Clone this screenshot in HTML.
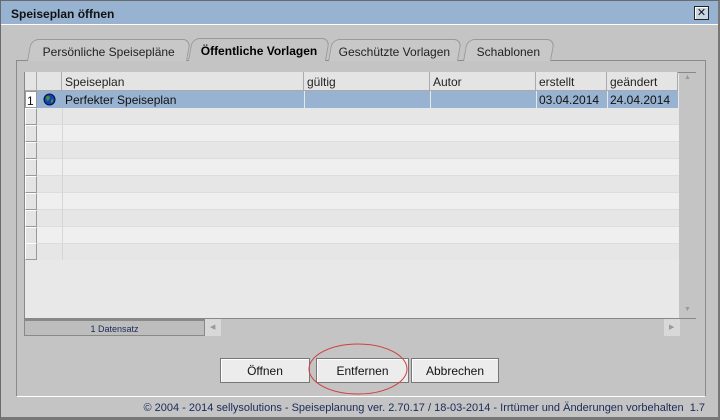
<!DOCTYPE html>
<html><head><meta charset="utf-8"><style>
*{box-sizing:border-box;margin:0;padding:0}
body{width:720px;height:420px;background:#c4c4c4;font-family:"Liberation Sans",sans-serif;font-size:12px;color:#111;position:relative;overflow:hidden}
.abs{position:absolute}
.win{left:0;top:0;width:720px;height:420px;border:1px solid #6a6a6a;border-bottom:3px solid #777;border-right:2px solid #777}
.title{left:1px;top:1px;width:717px;height:24px;background:#98b3d1;border-bottom:1px solid #fff;font-weight:bold;font-size:12px;padding:6px 0 0 10px}
.close{left:694px;top:6px;width:15px;height:14px;border:1px solid #222;background:#c8d6e6;font-size:11px;line-height:12px;text-align:center;box-shadow:inset 1px 1px #fff}
.tab{top:39px;height:22px;border:1px solid #999;border-bottom:none;border-radius:8px 8px 0 0;background:#c8c8c8;font-size:12px;text-align:center;padding-top:5px;transform:skew(-10deg);color:#222}
.tab span{display:inline-block;transform:skew(10deg)}
.panel{left:16px;top:60px;width:690px;height:337px;border:1px solid #fff;border-left:1px solid #8a8a8a;border-top:1px solid #8a8a8a;border-right:1px solid #8a8a8a;background:#c4c4c4}
.table{left:24px;top:72px;width:672px;height:247px;background:#e8e8e8;border:1px solid #888}
.hd{top:72px;height:19px;background:#e4e4e4;border-right:1px solid #aaa;border-bottom:1px solid #aaa;padding:3px 0 0 3px;color:#222}
.cell{height:17px;padding:2px 0 0 3px}
.rn{left:25px;width:12px;height:17px;background:#e4e4e4;border:1px solid #999;border-top:1px solid #fff;border-left:1px solid #fff}
.btn{top:358px;height:25px;background:#ececec;border:1px solid #777;box-shadow:inset 1px 1px #fff;text-align:center;padding-top:5px;font-size:12px;color:#111}
</style></head><body>
<div class="abs win"></div>
<div class="abs title">Speiseplan öffnen</div>
<div class="abs close">✕</div>
<div class="abs panel"></div>
<div class="abs tab" style="left:29px;width:160px"><span>Persönliche Speisepläne</span></div>
<div class="abs tab" style="left:330px;width:130px"><span>Geschützte Vorlagen</span></div>
<div class="abs tab" style="left:465px;width:88px"><span>Schablonen</span></div>
<div class="abs tab" style="left:190px;width:138px;background:#c4c4c4;height:23px;top:38px;z-index:2;font-weight:bold;color:#000"><span>Öffentliche Vorlagen</span></div>
<div class="abs table"></div>
<div class="abs" style="left:37px;top:108px;width:642px;height:152px;background:repeating-linear-gradient(#e6e6e6 0 16px,#ddd 16px 17px,#efefef 17px 33px,#ddd 33px 34px)"></div>
<div class="abs" style="left:62px;top:108px;width:1px;height:152px;background:#d6d6d6"></div>
<div class="abs" style="left:37px;top:91px;width:641px;height:17px;background:#98b3d1"></div>
<div class="abs" style="left:304px;top:91px;width:1px;height:17px;background:#e8e8e8"></div>
<div class="abs" style="left:430px;top:91px;width:1px;height:17px;background:#e8e8e8"></div>
<div class="abs" style="left:536px;top:91px;width:1px;height:17px;background:#e8e8e8"></div>
<div class="abs" style="left:607px;top:91px;width:1px;height:17px;background:#e8e8e8"></div>
<div class="abs hd" style="left:25px;width:12px"></div>
<div class="abs hd" style="left:37px;width:25px"></div>
<div class="abs hd" style="left:62px;width:242px">Speiseplan</div>
<div class="abs hd" style="left:304px;width:126px">gültig</div>
<div class="abs hd" style="left:430px;width:106px">Autor</div>
<div class="abs hd" style="left:536px;width:71px">erstellt</div>
<div class="abs hd" style="left:607px;width:71px">geändert</div>
<div class="abs rn" style="top:91px;font-size:12px;padding:2px 0 0 1px;background:#fff;border-color:#999">1</div>
<div class="abs rn" style="top:108px"></div><div class="abs rn" style="top:125px"></div><div class="abs rn" style="top:142px"></div><div class="abs rn" style="top:159px"></div><div class="abs rn" style="top:176px"></div><div class="abs rn" style="top:193px"></div><div class="abs rn" style="top:210px"></div><div class="abs rn" style="top:227px"></div><div class="abs rn" style="top:243px"></div>
<svg class="abs" style="left:43px;top:93px" width="13" height="13"><circle cx="6.5" cy="6.5" r="5.5" fill="#1a3fb0" stroke="#001040"/><path d="M3 4 Q5 2 7 4 L6 7 L4 8 Z M8 7 L10 6 L10 9 L8 10Z" fill="#3a9a30"/></svg>
<div class="abs cell" style="left:62px;top:91px;">Perfekter Speiseplan</div>
<div class="abs cell" style="left:536px;top:91px;">03.04.2014</div>
<div class="abs cell" style="left:607px;top:91px;">24.04.2014</div>
<div class="abs" style="left:679px;top:73px;width:17px;height:245px;background:#c4c4c4"></div>
<div class="abs" style="left:684px;top:74px;font-size:7px;color:#999">▲</div>
<div class="abs" style="left:684px;top:306px;font-size:7px;color:#999">▼</div>
<div class="abs" style="left:24px;top:319px;width:181px;height:17px;background:#bdbdbd;border:1px solid #888;border-top:2px solid #888;font-size:9px;color:#1a2a5a;text-align:center;padding-top:3px">1 Datensatz</div>
<div class="abs" style="left:205px;top:319px;width:475px;height:17px;background:#c4c4c4"></div>
<div class="abs" style="left:205px;top:319px;width:16px;height:17px;background:#d8d8d8;font-size:7px;color:#999;padding:4px 0 0 5px">◀</div>
<div class="abs" style="left:664px;top:319px;width:16px;height:17px;background:#d8d8d8;font-size:7px;color:#999;padding:4px 0 0 5px">▶</div>
<div class="abs btn" style="left:220px;width:90px">Öffnen</div>
<div class="abs btn" style="left:316px;width:93px">Entfernen</div>
<div class="abs btn" style="left:411px;width:88px">Abbrechen</div>
<svg class="abs" style="left:300px;top:338px" width="120" height="60"><ellipse cx="58" cy="31" rx="49" ry="25" fill="none" stroke="#d04040" stroke-width="1"/></svg>
<div class="abs" style="right:15px;top:402px;font-size:11px;color:#1a2a5a;white-space:nowrap">© 2004 - 2014 sellysolutions - Speiseplanung ver. 2.70.17 / 18-03-2014 - Irrtümer und Änderungen vorbehalten&nbsp; 1.7</div>
</body></html>
